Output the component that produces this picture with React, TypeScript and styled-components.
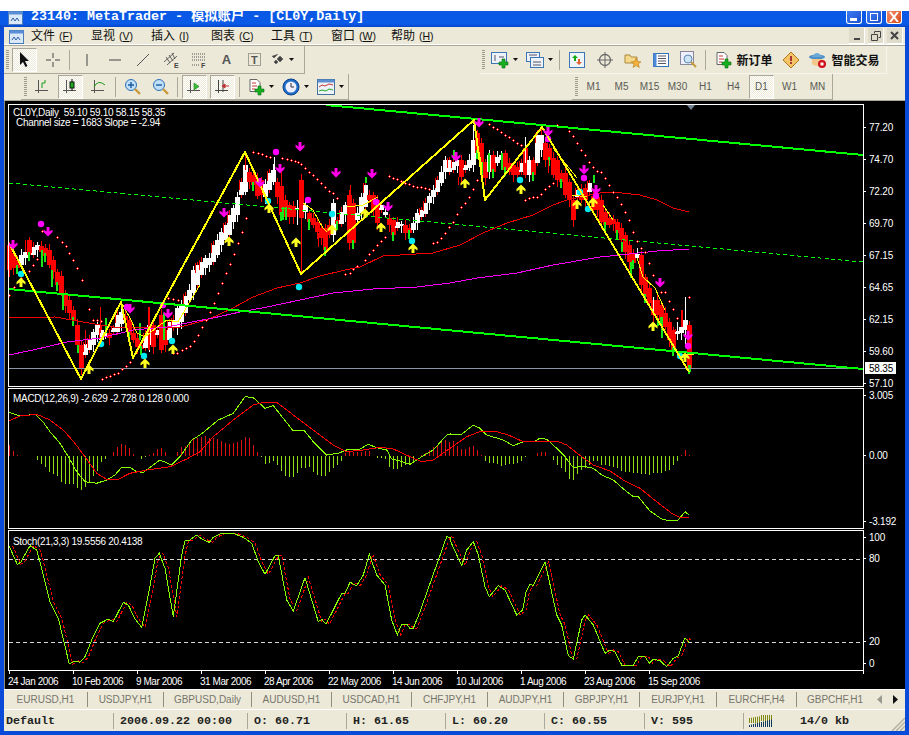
import React from "react";
import styled, { createGlobalStyle } from "styled-components";

const UI = '"Liberation Sans", "Noto Sans CJK SC", sans-serif';
const MONO = '"Liberation Mono", "Noto Sans CJK SC", monospace';

const Global = createGlobalStyle`
  html, body { margin: 0; padding: 0; background: #fff; }
  #root { width: 909px; height: 735px; overflow: hidden; }
`;

const Page = styled.div`
  width: 909px; height: 735px; padding-top: 11px; box-sizing: border-box;
  display: flex; flex-direction: column; background: #fff;
`;
const TitleBar = styled.div`
  height: 16px; flex: none; display: flex; align-items: flex-start; padding: 0 7px 0 8px;
  background: linear-gradient(#0a58e4, #0a5ae8 80%, #0646c8); color: #fff;
`;
const TitleIcon = styled.div`width: 15px; height: 13px; margin-right: 8px; margin-top: -1px;`;
const TitleText = styled.div`
  font: bold 13.33px/11px ${MONO}; white-space: pre; flex: 1; letter-spacing: 0; padding-top: 0;
`;
const CaptionBtn = styled.div<{ $c?: string }>`
  width: 16px; height: 13px; margin-left: 4px; box-sizing: border-box; border: 1px solid #fff; border-top: 0;
  border-radius: 0 0 3px 3px; background: ${(p) => p.$c || "linear-gradient(135deg,#3c7cf0,#1c50d0)"};
  position: relative; display: flex; align-items: center; justify-content: center;
`;
const Frame = styled.div`
  flex: 1; min-height: 0; display: flex; flex-direction: column; background: #ece9d8;
  border-left: 4px solid #0a4ad8; border-right: 4px solid #0a4ad8; border-bottom: 4px solid #0a4ad8;
`;
const MenuBar = styled.div`
  height: 18px; flex: none; display: flex; align-items: center; padding-left: 5px; background: #ece9d8;
  border-bottom: 1px solid #aca899; box-shadow: inset 0 -1px 0 #fff;
`;
const MenuIcon = styled.div`width: 22px; height: 16px; display: flex; align-items: center;`;
const MenuItem = styled.div`
  width: 60px; flex: none; font: 12px/16px ${UI}; color: #111; white-space: nowrap;
  & span { font-size: 10.5px; margin-left: 4px; }
  & u { text-decoration: underline; }
`;
const MdiGroup = styled.div`margin-left: auto; display: flex; gap: 3px; padding-right: 2px;`;
const MdiBtn = styled.div`
  width: 15px; height: 15px; display: flex; align-items: center; justify-content: center; background: #dedbcb;
  border-right: 1px solid #fff; border-bottom: 1px solid #fff;
`;
const ToolRow = styled.div<{ $pl?: number; $pr?: number; $line?: boolean }>`
  flex: none; display: flex; justify-content: space-between;
  padding: 0 ${(p) => p.$pr || 0}px 0 ${(p) => p.$pl || 0}px;
  border-bottom: ${(p) => (p.$line ? "1px solid #aca899" : "0")};
`;
const Toolbar = styled.div<{ $pl?: number; $w: number; $h: number; $edge?: string }>`
  width: ${(p) => p.$w}px; height: ${(p) => p.$h}px; box-sizing: border-box; display: flex; align-items: center; gap: 3px;
  padding-left: ${(p) => p.$pl ?? 2}px; border-right: 1px solid ${(p) => p.$edge || "#aca899"};
  border-bottom: 1px solid ${(p) => p.$edge || "#aca899"};
`;
const Grip = styled.div`
  width: 3px; height: 20px; flex: none;
  background: repeating-linear-gradient(#9c9a8a 0 1px, #ece9d8 1px 2px);
`;
const Sep = styled.div`width: 3px; height: 20px; flex: none; display: flex; justify-content: center;
  &::before { content: ""; width: 1px; background: #aca899; }`;
const ToolBtn = styled.div<{ $w?: number; $pressed?: boolean }>`
  width: ${(p) => p.$w || 25}px; height: 24px; flex: none; box-sizing: border-box; display: flex; align-items: center;
  justify-content: center; gap: 4px;
  font: 10px ${UI}; color: #5b5b55;
  ${(p) => p.$pressed ? "background: repeating-conic-gradient(#fff 0 25%, #ece9d8 0 50%) 0 0/2px 2px; border: 1px solid; border-color: #aca899 #fff #fff #aca899;" : ""}
`;
const LabelText = styled.span`font: bold 12px ${UI}; color: #111; letter-spacing: 0; white-space: nowrap;`;
const ChartWin = styled.div`
  height: 588px; flex: none; background: #000; border-left: 1px solid #8d8b80; display: flex; flex-direction: column;
  padding-top: 2px; box-sizing: border-box;
`;
const Pane = styled.div<{ $h: number }>`
  height: ${(p) => p.$h}px; flex: none; position: relative; width: 900px;
  & > svg { display: block; overflow: visible; }
`;
const Legend = styled.div<{ $t: number; $l: number }>`
  position: absolute; top: ${(p) => p.$t}px; left: ${(p) => p.$l}px; color: #fff; white-space: pre;
  font: 10px/10px ${UI}; letter-spacing: -0.3px;
`;
const DateRow = styled.div`
  height: 18px; flex: none; display: flex; padding-left: 3px; 
`;
const DateCell = styled.div`
  width: 64px; flex: none; color: #fff; font: 10px/15px ${UI}; white-space: nowrap; letter-spacing: -0.45px; 
`;
const Tabs = styled.div`
  height: 21px; flex: none; display: flex; align-items: center; border-top: 1px solid #fff; border-bottom: 1px solid #fff; 
  box-sizing: border-box;
`;
const Tab = styled.div<{ $w: number; $last?: boolean }>`
  width: ${(p) => p.$w}px; flex: none; height: 15px; text-align: center; color: #76756c; font: 10px/15px ${UI};
  border-right: ${(p) => (p.$last ? 0 : "1px solid #8e8c7e")}; box-sizing: border-box; white-space: nowrap;
`;
const Arrows = styled.div`margin-left: auto; display: flex; gap: 11px; padding-right: 7px; align-items: center;`;
const Status = styled.div`
  flex: 1; display: flex; align-items: center; position: relative; padding-top: 1px;
`;
const Cell = styled.div<{ $w: number; $pl?: number; $last?: boolean }>`
  width: ${(p) => p.$w}px; flex: none; height: 16px; box-sizing: border-box; padding-left: ${(p) => p.$pl ?? 6}px;
  border-right: ${(p) => (p.$last ? 0 : "1px solid #aca899")}; display: flex; align-items: center; gap: 27px;
  font: bold 11.67px/16px ${MONO}; color: #222; white-space: pre;
`;
const GripCorner = styled.div`position: absolute; right: 0; bottom: 0; width: 14px; height: 14px; line-height: 0;`;

/* ---------- chart data ---------- */
const C = `245 270 R|253 268 R|260 268 R|255 265 W|252 258 W|240 255 R|247 255 W|245 250 W|246 252 R|248 256 R|250 265 R|260 272 R|272 285 R|276 293 R|293 306 R|300 313 R|310 320 R|325 345 R|345 368 R|344 355 W|340 350 W|332 345 W|325 335 W|330 340 W|333 336 W|333 338 R|328 332 W|315 332 W|312 324 W|316 320 R|320 335 R|333 340 R|338 347 R|345 349 R|335 348 W|325 345 W|325 347 R|330 335 W|315 350 R|330 345 R|322 340 W|320 328 W|308 328 W|305 322 W|296 313 W|290 300 W|270 293 W|265 285 W|262 275 W|258 268 W|258 265 W|245 262 W|240 255 W|232 245 W|225 240 W|215 235 W|208 222 W|197 215 W|182 195 W|165 192 W|172 182 R|175 185 R|178 196 R|180 195 R|184 197 W|173 190 W|170 182 W|182 197 R|186 215 R|200 217 R|205 217 R|206 217 R|208 210 W|180 218 R|205 212 W|213 222 R|218 225 R|222 232 R|228 238 R|228 250 R|225 235 R|203 235 W|220 224 R|212 224 W|205 215 W|195 243 R|203 243 R|213 220 W|197 213 W|185 207 W|195 200 R|195 210 R|200 223 R|205 210 W|212 215 W|218 225 R|220 235 R|222 228 W|224 226 W|225 233 R|228 233 R|223 230 W|213 223 W|210 217 W|203 214 W|196 203 W|190 197 W|180 192 W|172 183 W|160 172 W|160 172 W|162 170 W|160 166 W|160 177 R|165 170 W|160 168 W|140 165 W|133 153 R|143 162 R|162 178 R|155 172 W|155 172 R|157 163 W|155 160 W|153 170 R|163 172 R|165 175 R|167 175 R|163 172 W|148 175 R|160 175 W|160 175 R|135 163 W|135 150 W|143 160 R|148 160 R|158 175 R|160 180 R|173 182 R|173 195 R|182 200 R|200 220 R|190 197 W|190 200 R|188 200 R|183 192 W|196 210 R|197 210 R|200 222 R|212 225 R|218 225 R|219 224 R|222 233 R|228 240 R|235 252 R|245 262 R|253 263 R|254 258 W|255 285 R|277 297 R|288 303 R|300 315 R|300 315 R|305 320 R|313 327 R|322 340 R|330 350 R|331 334 W|327 333 W|320 330 W|325 368 R`
  .split("|").map((s) => { const a = s.split(" "); return { t: +a[0], b: +a[1], w: a[2] === "W" }; });

const GRN = "#18e818", RED = "#ff0000";
const EXTRA: [number, number, number, string, number][] = [
  [41, 250, 267, GRN, 2], [51, 270, 287, GRN, 2], [62, 295, 310, GRN, 2], [77, 345, 353, GRN, 2], [100, 307, 333, RED, 1],
  [105, 318, 333, GRN, 2], [139, 323, 340, GRN, 2], [148, 307, 350, RED, 2], [163, 313, 340, GRN, 2], [282, 207, 220, GRN, 2],
  [285, 207, 220, GRN, 2], [297, 200, 225, "#fff", 1], [308, 224, 230, GRN, 2], [318, 233, 247, RED, 1], [323, 233, 247, RED, 1],
  [365, 177, 183, GRN, 2], [350, 185, 197, RED, 1], [453, 150, 160, GRN, 2], [458, 177, 185, RED, 1], [481, 162, 177, GRN, 2],
  [488, 153, 172, GRN, 2], [501, 153, 170, GRN, 2], [525, 137, 163, "#fff", 1], [548, 160, 173, RED, 1], [593, 175, 183, GRN, 2],
  [573, 220, 226, RED, 1], [621, 242, 252, GRN, 2], [630, 262, 278, GRN, 2], [661, 317, 338, GRN, 2], [657, 318, 326, GRN, 2],
  [653, 297, 313, "#fff", 1], [681, 310, 327, RED, 2], [685, 297, 347, "#fff", 1], [677, 322, 340, "#fff", 1], [689, 365, 372, GRN, 2],
  [301, 179, 273, RED, 1], [245, 155, 170, RED, 1], [274, 157, 170, "#fff", 1], [281, 170, 186, RED, 1], [473, 125, 140, "#fff", 1],
  [541, 125, 135, RED, 1], [85, 330, 345, RED, 1], [25, 240, 252, RED, 1], [29, 240, 250, RED, 1],
];

const z = (a: number[], ox: number, oy: number) => {
  const o: string[] = [];
  for (let i = 0; i < a.length; i += 2) o.push(`${(ox + a[i] / 3).toFixed(1)},${(oy + a[i + 1] / 3).toFixed(1)}`);
  return o.join(" ");
};
const shift = (s: string, dx: number) =>
  s.split(" ").map((p) => { const [x, y] = p.split(","); return `${+x + dx},${y}`; }).join(" ");

const RED_MA = "9,318 55,317 83,322 113,327 180,327 207,320 233,308 253,297 277,288 300,283 320,276 345,270 360,267 383,256 433,253 460,245 483,233 507,223 533,215 553,205 567,200 585,196 600,193 613,192 640,195 657,200 673,208 689,212";
const MAG_MA = "9,355 33,350 67,342 100,338 133,330 167,327 187,323 213,318 240,312 267,307 300,300 333,293 373,289 417,287 450,283 477,278 517,273 553,265 600,257 620,255 657,251 689,249";
const ZIG = "9,243 81,379 121,302 133,358 245,152 301,274 474,120 485,200 542,127 689,372";
const THIN_Y = [
  "121,302 130,318 137,333 145,337 157,327 167,320 178,322 185,310 200,285",
  "303,203 313,210 323,228 327,232",
  "347,207 363,205 378,197",
  "476,137 482,167",
  "553,148 577,178",
  "572,195 587,197",
  "603,205 613,220",
  "637,258 643,277 655,288 665,310",
  "678,354 694,354",
];
const DOTS: [number, number][] = ([
  [9,295],[14,287],[21,278],[29,271],[33,265],[37,259],[42,231],[50,232],[57,237],[62,242],[66,246],[69,253],[73,260],[77,268],[82,280],[89,309],[93,320],[97,320],[101,321],
  [102,379],[106,377],[110,376],[114,374],[118,373],[122,369],[126,366],[130,362],
  [168,298],[173,299],[178,300],[173,353],[177,353],[182,350],[186,348],[190,346],[194,341],[198,335],[202,327],[206,320],[210,312],[214,303],[218,293],[222,283],[226,273],[230,264],[234,254],[238,243],[242,232],[246,218],
  [253,152],[258,153],[262,154],[266,156],[270,157],[282,158],[287,159],[291,160],[295,161],[298,162],[301,164],[305,168],[309,172],[313,175],[317,179],[321,183],[325,187],[329,191],[333,193],[337,198],
  [345,274],[350,273],[353,269],[357,266],[365,260],[369,254],[373,250],[377,245],[381,241],[385,237],
  [389,176],[393,178],[397,179],[401,181],[405,183],[409,184],[413,186],[417,187],[421,187],[425,188],[429,189],
  [433,243],[437,242],[441,238],[445,233],[449,227],[453,222],[457,214],[461,207],[465,203],[469,197],[473,189],[477,180],
  [489,124],[493,127],[497,129],[501,132],[505,135],[509,137],[513,140],[517,143],[521,145],
  [525,200],[529,198],[533,197],[537,197],[541,194],[545,189],[549,186],[553,183],
  [557,125],[569,131],[573,136],[577,143],[581,150],[585,155],[589,162],[593,167],[597,171],[601,172],[605,178],[609,185],[613,192],[617,197],[621,204],[625,212],[629,220],[633,232],[637,241],[641,248],[645,252],[649,263],[653,275],[661,292],[665,292],[669,301],[673,309],[677,318],[689,297],
] as [number, number][]);
const DOWN: [number, number][] = [[13,245],[48,232],[130,309],[168,314],[224,213],[260,183],[280,169],[300,147],[336,173],[372,174],[388,207],[456,157],[479,123],[548,132],[584,170],[596,190],[660,283],[688,336]];
const UP: [number, number][] = [[21,282],[89,369],[145,363],[173,349],[229,241],[269,208],[296,242],[332,229],[365,213],[381,227],[413,248],[465,183],[521,189],[577,204],[593,202],[653,326],[685,357]];
const CYAN: [number, number][] = [[21,274],[101,344],[144,356],[172,341],[268,201],[299,287],[332,214],[412,241],[520,180],[588,209],[580,192],[680,356]];
const MAGD: [number, number][] = [[41,224],[127,307],[163,305],[276,152],[308,200],[376,202],[548,139],[584,178],[596,196],[688,346]];

const MACD_G1 = [27,82,60,93,105,88,130,112,150,140,180,175,205,215,230,260,255,290,290,295,320,285,345,270,365,247,390,247,410,260,430,262,460,240,480,225,515,240,540,215,575,165,600,150,625,130,655,105,700,85,735,35,760,38,795,70,820,62,850,100,880,138,912,136,940,170,980,210,1015,205,1045,193,1075,195,1105,178,1130,188,1160,195,1175,222,1200,228,1230,238,1265,215,1300,195,1340,150,1350,147];
const MACD_G2 = [0,148,35,148,70,120,90,130,110,150,160,165,190,182,220,170,250,170,270,160,290,163,320,190,345,215,370,248,395,243,430,250,455,270,490,285,530,320,550,335,565,335,600,378,635,402,660,408,685,405,705,380,717,390];
const MACD_R1 = [27,108,60,93,110,88,150,105,190,135,225,175,255,215,290,265,320,283,350,285,390,265,440,255,510,245,560,222,600,200,640,155,700,105,760,60,790,52,830,52,880,90,940,135,1000,180,1040,200,1090,195,1140,187,1180,192,1230,215,1265,230,1300,225,1350,190];
const MACD_R2 = [0,190,50,155,95,138,140,140,175,150,215,168,325,170,350,180,395,215,430,240,480,258,520,285,570,310,620,350,665,385,690,397,717,397];
const HIST = [180,198,210,212,212,213,213,225,237,245,260,268,272,290,297,297,297,310,314,305,290,272,258,232,222,213,200,185,177,180,188,207,213,222,215,210,205,192,188,200,212,212,200,185,183,172,160,158,155,153,158,160,162,168,175,178,175,172,165,155,160,180,200,215,236,233,228,240,258,272,276,275,265,250,250,245,262,270,272,272,262,250,240,228,205,202,202,200,200,198,198,213,218,218,222,245,252,252,245,240,240,232,213,210,205,195,185,180,170,165,170,
  168,183,193,192,185,183,195,210,228,235,235,237,243,240,237,238,233,228,215,213,213,203,202,200,213,225,240,248,262,282,285,267,255,250,240,228,228,240,240,242,245,250,257,260,262,263,265,268,268,270,265,265,265,258,255,240,228,210,195,210];
const ST1 = [27,62,52,118,62,112,90,62,110,75,125,130,150,230,175,280,208,417,225,408,240,412,255,395,275,345,300,295,325,282,340,290,370,232,385,240,405,282,425,307,445,210,465,100,478,85,495,130,520,275,545,90,555,48,570,45,590,30,605,42,628,52,640,37,665,25,700,25,730,37,755,55,775,110,795,148,825,92,835,92,860,225,880,258,915,158,955,290,965,283,978,298,1025,205,1035,205,1050,172,1070,182,1090,150,1108,88,1130,150,1155,180,1175,285,1192,330,1205,298,1220,298,1230,310,1240,310,1260,260,1340,35,1350,37];
const ST2 = [0,45,35,122,50,75,70,50,85,90,105,185,118,215,145,182,165,195,200,270,218,255,228,200,240,178,250,182,285,110,320,270,335,300,355,392,370,402,395,285,405,270,430,300,465,385,480,375,495,380,515,420,550,420,565,395,585,395,598,415,610,402,630,407,650,425,670,400,685,392,705,338,717,352];

/* ---------- chart drawing ---------- */
const AxisText: React.FC<{ y: number; x?: number; children: React.ReactNode }> = ({ y, x = 869, children }) => (
  <text x={x} y={y + 4} fontFamily='"Liberation Sans", sans-serif' fontSize={10} letterSpacing={-0.2} fill="#fff">{children}</text>
);
const Tick: React.FC<{ y: number }> = ({ y }) => <rect x={864} y={y} width={2} height={1} fill="#fff" />;
const Border: React.FC<{ t: number; b: number }> = ({ t, b }) => (
  <rect x={8.5} y={t + 0.5} width={855} height={b - t} fill="none" stroke="#fff" strokeWidth={1} shapeRendering="crispEdges" />
);

const MainPane = () => (
  <svg width={900} height={284} viewBox="5 103 900 284">
    {C.map((c, i) => {
      const x = 9 + 4 * i;
      const h = (i * 37 + 11) % 7;
      return (
        <g key={i} shapeRendering="crispEdges">
          <rect x={x} y={c.t - 3 - (h % 4)} width={1} height={c.b - c.t + 6 + h} fill={c.w ? (h < 3 ? RED : "#fff") : RED} />
          <rect x={x - 2} y={c.t} width={5} height={c.b - c.t} fill={c.w ? "#fff" : RED} />
          {c.w && h < 3 ? <rect x={x - 2} y={c.t - 2} width={1} height={Math.min(c.b - c.t, 10)} fill={RED} /> : null}
          {!c.w && h < 2 ? <rect x={x - 1} y={c.b - 3} width={2} height={9} fill={GRN} /> : null}
        </g>
      );
    })}
    {EXTRA.map((e, i) => (
      <rect key={i} x={e[0]} y={e[1]} width={e[4]} height={e[2] - e[1]} fill={e[3]} shapeRendering="crispEdges" />
    ))}
    <g fill="none" shapeRendering="crispEdges">
      <line x1={9} y1={183} x2={863} y2={262} stroke="#00ff00" strokeWidth={1} strokeDasharray="4 3" />
      <line x1={9} y1={368.5} x2={863} y2={368.5} stroke="#8a96a8" strokeWidth={1} />
      <polyline points={RED_MA} stroke="#f00000" strokeWidth={1} />
      <polyline points={MAG_MA} stroke="#ff00ff" strokeWidth={1} />
      {THIN_Y.map((p) => <polyline key={p} points={p} stroke="#ffff00" strokeWidth={1} />)}
    </g>
    {DOTS.map(([x, y], i) => (
      <g key={i} shapeRendering="crispEdges">
        <rect x={x - 1} y={y} width={3} height={1} fill="#f00" />
        <rect x={x} y={y - 1} width={1} height={3} fill="#f00" />
        <rect x={x} y={y} width={1} height={1} fill="#fff" />
      </g>
    ))}
    {CYAN.map(([x, y], i) => <circle key={i} cx={x} cy={y} r={3.2} fill="#00e8f0" />)}
    {MAGD.map(([x, y], i) => <circle key={i} cx={x} cy={y} r={3.2} fill="#ff00ff" />)}
    <g fill="none" shapeRendering="crispEdges">
      <line x1={326} y1={105} x2={863} y2={155} stroke="#00ff00" strokeWidth={2} />
      <line x1={9} y1={289} x2={863} y2={369} stroke="#00ff00" strokeWidth={2} />
      <polyline points={ZIG} stroke="#ffff00" strokeWidth={2} strokeLinejoin="round" />
    </g>
    {DOWN.map(([x, y], i) => (
      <path key={i} fill="#ff00e8" d={`M${x - 1.5} ${y - 5}h3v4.500l3-2v2.500l-4.500 4.500l-4.500-4.500v-2.500l3 2z`} />
    ))}
    {UP.map(([x, y], i) => (
      <path key={i} fill="#ffff20" d={`M${x - 1.5} ${y + 5}h3v-4.500l3 2v-2.500l-4.500-4.500l-4.500 4.500v2.500l3-2z`} />
    ))}
    <path d="M686 104h10l-5 6z" fill="#708090" />
    <Border t={104} b={386} />
    {[[127,"77.20"],[159,"74.70"],[191,"72.20"],[223,"69.70"],[255,"67.15"],[287,"64.65"],[319,"62.15"],[351,"59.60"],[383,"57.10"]].map(([y, t]) => (
      <g key={t}><Tick y={y as number} /><AxisText y={y as number}>{t}</AxisText></g>
    ))}
    <rect x={865} y={362} width={31} height={12} fill="#fff" />
    <text x={869} y={372} fontFamily='"Liberation Sans", sans-serif' fontSize={10} letterSpacing={-0.2} fill="#000">58.35</text>
  </svg>
);

const MacdPane = () => (
  <svg width={900} height={142} viewBox="5 387 900 142">
    {HIST.map((t, i) => {
      const x = 9 + 4 * i; const y = 385 + t / 3;
      if (Math.abs(t - 213) < 1) return null;
      return t < 213
        ? <rect key={i} x={x} y={y} width={1} height={456 - y} fill="#e01010" shapeRendering="crispEdges" />
        : <rect key={i} x={x} y={456} width={1} height={y - 456} fill="#8fe010" shapeRendering="crispEdges" />;
    })}
    <g fill="none" strokeWidth={1} shapeRendering="crispEdges">
      <polyline points={z(MACD_G1, 0, 385) + " " + z(MACD_G2, 450, 385)} stroke="#88ff00" />
      <polyline points={z(MACD_R1, 0, 385) + " " + z(MACD_R2, 450, 385)} stroke="#ff0000" />
    </g>
    <Border t={388} b={528} />
    {[[395,"3.005"],[455,"0.00"],[521,"-3.192"]].map(([y, t]) => (
      <g key={t}><Tick y={y as number} /><AxisText y={y as number}>{t}</AxisText></g>
    ))}
  </svg>
);

const stoch = z(ST1, 0, 525) + " " + z(ST2, 450, 525);
const StochPane = () => (
  <svg width={900} height={142} viewBox="5 529 900 142">
    <g fill="none" strokeWidth={1} shapeRendering="crispEdges">
      <line x1={9} y1={559.5} x2={863} y2={559.5} stroke="#d8d8d8" strokeDasharray="4 3" />
      <line x1={9} y1={642.5} x2={863} y2={642.5} stroke="#d8d8d8" strokeDasharray="4 3" />
      <polyline points={shift(stoch, 3.5)} stroke="#ff0000" strokeDasharray="3 2" />
      <polyline points={stoch} stroke="#88ff00" />
    </g>
    <Border t={530} b={670} />
    {[[537,"100"],[558,"80"],[641,"20"],[663,"0"]].map(([y, t]) => (
      <g key={t}><Tick y={y as number} /><AxisText y={y as number}>{t}</AxisText></g>
    ))}
  </svg>
);

const DATES = ["24 Jan 2006","10 Feb 2006","9 Mar 2006","31 Mar 2006","28 Apr 2006","22 May 2006","14 Jun 2006","10 Jul 2006","1 Aug 2006","23 Aug 2006","15 Sep 2006"];
const TickRow = styled.svg`display: block; flex: none;`;

/* ---------- icons ---------- */
const I: React.FC<{ w?: number; h?: number; children: React.ReactNode }> = ({ w = 18, h = 18, children }) => (
  <svg width={w} height={h} viewBox={`0 0 ${w} ${h}`} style={{ flex: "none" }}>{children}</svg>
);
const Caret = () => <I w={5} h={3}><path d="M0 0h5l-2.5 3z" fill="#111" /></I>;
const Axes = ({ c = "#555" }: { c?: string }) => (
  <g stroke={c} fill="none" strokeWidth="1"><path d="M4.5 2v13M1 12.5h13" /></g>
);
const AppIcon = () => (
  <I w={15} h={15}>
    <rect x=".5" y="1.5" width="14" height="13" fill="#dbe8f8" stroke="#4a7cb8" />
    <rect x=".5" y="1.5" width="14" height="3" fill="#5a8fd8" />
    <path d="M3 11l2-3 2 3 2-3 2 3" stroke="#2a5fa8" fill="none" />
  </I>
);
const PlusBadge = () => <path d="M8 8h3V5h3v3h3v3h-3v3h-3v-3H8z" fill="#14b01e" stroke="#0a6b10" strokeWidth=".6" transform="translate(0 3)" />;
const PaperPlus = () => (
  <I><path d="M3 1.5h7l3 3v9H3z" fill="#fff" stroke="#666" /><path d="M5 5h4M5 8h5M5 11h3" stroke="#c33" /><PlusBadge /></I>
);
const Clock = () => (
  <I><circle cx="9" cy="9" r="8" fill="#1e6ec8" stroke="#0a3f88" /><circle cx="9" cy="9" r="5.5" fill="#eef" /><path d="M9 5v4h3" stroke="#333" fill="none" /></I>
);
const TemplateIcon = () => (
  <I w={18} h={16}><rect x=".5" y=".5" width="17" height="15" fill="#eef3fa" stroke="#41719c" /><rect x=".5" y=".5" width="17" height="3" fill="#5b8ed0" /><path d="M2 8l3-2 3 1 4-2 4 1" stroke="#c33" fill="none" /><path d="M2 12l3-1 4 1 3-2 4 1" stroke="#2a2" fill="none" /></I>
);
const ChartBox = () => (
  <I><rect x=".5" y="1.5" width="15" height="11" fill="#eef3fa" stroke="#3d76b4" /><path d="M4 4v6M8 6h5" stroke="#556" /><PlusBadge /></I>
);
const ChartBox2 = () => (
  <I><rect x=".5" y="1.5" width="13" height="9" fill="#eef3fa" stroke="#3d76b4" /><rect x="4.5" y="6.5" width="13" height="10" fill="#eef3fa" stroke="#3d76b4" /><path d="M3 4h8M7 11h8M7 14h8" stroke="#556" /></I>
);

const MENU: [string, string][] = [["文件", "F"], ["显视", "V"], ["插入", "I"], ["图表", "C"], ["工具", "T"], ["窗口", "W"], ["帮助", "H"]];
const PERIODS = ["M1", "M5", "M15", "M30", "H1", "H4", "D1", "W1", "MN"];
const TABS: [string, number][] = [["EURUSD,H1", 84], ["USDJPY,H1", 76], ["GBPUSD,Daily", 88], ["AUDUSD,H1", 80], ["USDCAD,H1", 80], ["CHFJPY,H1", 76], ["AUDJPY,H1", 76], ["GBPJPY,H1", 76], ["EURJPY,H1", 77], ["EURCHF,H4", 80], ["GBPCHF,H1", 76]];

export default function App() {
  return (
    <>
      <Global />
      <Page>
        <TitleBar>
          <TitleIcon><AppIcon /></TitleIcon>
          <TitleText>23140: MetaTrader - 模拟账户 - [CL0Y,Daily]</TitleText>
          <CaptionBtn><I w={8} h={8}><rect x="0" y="5" width="7" height="3" fill="#fff" /></I></CaptionBtn>
          <CaptionBtn><I w={10} h={8}><rect x="1.5" y=".5" width="7" height="7" fill="none" stroke="#fff" /></I></CaptionBtn>
          <CaptionBtn $c="linear-gradient(135deg,#f09070,#d84818)"><I w={10} h={10}><path d="M1 0l8 10M9 0l-8 10" stroke="#fff" strokeWidth="2" /></I></CaptionBtn>
        </TitleBar>
        <Frame>
          <MenuBar>
            <MenuIcon><AppIcon /></MenuIcon>
            {MENU.map(([t, k]) => (
              <MenuItem key={k}>{t}<span>(<u>{k}</u>)</span></MenuItem>
            ))}
            <MdiGroup>
              <MdiBtn><I w={8} h={8}><rect x="1" y="6" width="6" height="2" fill="#444" /></I></MdiBtn>
              <MdiBtn><I w={10} h={10}><path d="M3.5 2.5V.5h6v6h-2M.5 3.5h6v6h-6z" fill="none" stroke="#444" /></I></MdiBtn>
              <MdiBtn><I w={9} h={9}><path d="M1 1l7 7M8 1l-7 7" stroke="#444" strokeWidth="2" /></I></MdiBtn>
            </MdiGroup>
          </MenuBar>
          <ToolRow $pr={18}>
            <Toolbar $w={301} $h={28}>
              <Grip />
              <ToolBtn $pressed><I w={12} h={15}><path d="M1 0v13l3-3 2.500 5 2-1-2.500-5h4z" fill="#111" /></I></ToolBtn>
              <ToolBtn><I w={16} h={16}><path d="M8 1v5M8 10v5M1 8h5M10 8h5" stroke="#444" /></I></ToolBtn>
              <Sep />
              <ToolBtn><I w={4} h={14}><path d="M2 1v12" stroke="#444" /></I></ToolBtn>
              <ToolBtn><I w={14} h={4}><path d="M1 2h12" stroke="#444" /></I></ToolBtn>
              <ToolBtn><I w={14} h={14}><path d="M1 13L13 1" stroke="#555" /></I></ToolBtn>
              <ToolBtn><I w={16} h={16}><path d="M1 10l10-9M4 13l10-9M3 5l4 6M6 3l4 6M9 1l3 6" stroke="#555" strokeWidth=".9" fill="none" /><text x="11" y="16" fontSize="7" fontFamily="Liberation Sans" fontWeight="bold" fill="#444">E</text></I></ToolBtn>
              <ToolBtn><I w={16} h={16}><path d="M1 2h13M1 5h13M1 8h13M1 13h7" stroke="#555" strokeDasharray="1 1" /><text x="10" y="16" fontSize="7" fontFamily="Liberation Sans" fontWeight="bold" fill="#444">F</text></I></ToolBtn>
              <ToolBtn><LabelText style={{ fontSize: 13, color: "#555" }}>A</LabelText></ToolBtn>
              <ToolBtn><I w={13} h={13}><rect x=".5" y=".5" width="12" height="12" fill="none" stroke="#555" strokeDasharray="1 1" /><text x="3" y="11" fontSize="11" fontFamily="Liberation Sans" fontWeight="bold" fill="#555">T</text></I></ToolBtn>
              <ToolBtn><I w={13} h={12}><path d="M0 2l2 2 4-4M5 5l3 3 3-3-3-3zM2 8l2 2 2-2-2-2z" fill="#444" stroke="#444" strokeWidth=".5" /></I><Caret /></ToolBtn>
            </Toolbar>
            <Toolbar $w={407} $h={28} $pl={2} $edge="#f6f5ee">
              <Grip />
              <ToolBtn $w={32}><ChartBox /><Caret /></ToolBtn>
              <ToolBtn $w={32}><ChartBox2 /><Caret /></ToolBtn>
              <Sep />
              <ToolBtn><I w={16} h={16}><rect x=".5" y=".5" width="15" height="15" fill="#eef5fb" stroke="#3d76b4" /><path d="M5 9V6H3l3-3 3 3H7v3z" fill="#1a1" /><path d="M9 7v3H7l3 3 3-3h-2V7z" fill="#d63" /></I></ToolBtn>
              <ToolBtn><I w={16} h={16}><circle cx="8" cy="8" r="5.500" fill="none" stroke="#666" strokeWidth="1.300" /><path d="M8 0v16M0 8h16" stroke="#666" /></I></ToolBtn>
              <ToolBtn><I w={18} h={16}><path d="M1 3h5l1 2h6v6H1z" fill="#f5d88a" stroke="#a98a3c" /><path d="M12 6l1.500 3.500 3.500.3-2.700 2.200 1 3.500-3.300-2-3 2 1-3.500L7.200 9.800l3.500-.3z" fill="#f3b13c" stroke="#b77d1c" strokeWidth=".6" /></I></ToolBtn>
              <ToolBtn><I w={16} h={14}><rect x=".5" y=".5" width="15" height="13" fill="#fff" stroke="#2f72b8" /><rect x=".5" y=".5" width="3" height="13" fill="#4a8ad8" /><path d="M5 3h8M5 5.500h8M5 8h8M5 10.500h8" stroke="#556" /></I></ToolBtn>
              <ToolBtn><I w={18} h={17}><rect x=".5" y=".5" width="13" height="13" fill="#eef" stroke="#889" /><circle cx="8" cy="8" r="4" fill="#cde4f6" stroke="#5c8ab0" /><path d="M11 11l5 5" stroke="#c89a3c" strokeWidth="2" /></I></ToolBtn>
              <Sep />
              <ToolBtn $w={67}><PaperPlus /><LabelText>新订单</LabelText></ToolBtn>
              <ToolBtn $w={22}><I w={16} h={16}><path d="M8 0l8 8-8 8-8-8z" fill="#f3c468" stroke="#b07a1c" /><rect x="7" y="4" width="2" height="5" fill="#a33" /><rect x="7" y="10" width="2" height="2" fill="#a33" /></I></ToolBtn>
              <ToolBtn $w={79}><I w={18} h={16}><ellipse cx="8" cy="5" rx="8" ry="2.500" fill="#4e90c8" /><path d="M3 5q5-8 10 0z" fill="#6aa8d8" /><path d="M3 7h10v5q-5 4-10 0z" fill="#f3c888" /><circle cx="13" cy="12" r="4" fill="#d0101a" /><rect x="11.500" y="10.500" width="3" height="3" fill="#fff" /></I><LabelText>智能交易</LabelText></ToolBtn>
            </Toolbar>
          </ToolRow>
          <ToolRow $pl={17} $pr={72} $line>
            <Toolbar $w={328} $h={26} $pl={3}>
              <Grip />
              <ToolBtn><I><Axes /><path d="M8 10V5h3V2" stroke="#1a9a1a" fill="none" /></I></ToolBtn>
              <ToolBtn $pressed><I><Axes /><rect x="8" y="4" width="4" height="6" fill="#1aaa1a" stroke="#111" /><path d="M10 1v3M10 10v3" stroke="#111" /></I></ToolBtn>
              <ToolBtn><I><Axes /><path d="M4 9q4-8 11-2" stroke="#1a9a1a" fill="none" /></I></ToolBtn>
              <Sep />
              <ToolBtn><I w={17} h={17}><circle cx="7" cy="7" r="5.500" fill="#bfe0f8" stroke="#2f6fb4" /><path d="M4 7h6M7 4v6" stroke="#1a5aa0" strokeWidth="1.400" /><path d="M11 11l5 5" stroke="#c89a3c" strokeWidth="2.400" /></I></ToolBtn>
              <ToolBtn><I w={17} h={17}><circle cx="7" cy="7" r="5.500" fill="#bfe0f8" stroke="#2f6fb4" /><path d="M4 7h6" stroke="#1a5aa0" strokeWidth="1.400" /><path d="M11 11l5 5" stroke="#c89a3c" strokeWidth="2.400" /></I></ToolBtn>
              <Sep />
              <ToolBtn $pressed><I><Axes /><path d="M8 5l5 3.500-5 3.500z" fill="#35c035" stroke="#1a7a1a" strokeWidth=".6" /></I></ToolBtn>
              <ToolBtn $pressed><I><Axes c="#444" /><path d="M9 2v12" stroke="#444" /><path d="M15 8l-4 0M11 6l-3 2 3 2z" fill="#c03030" stroke="#c03030" /></I></ToolBtn>
              <Sep />
              <ToolBtn $w={32}><PaperPlus /><Caret /></ToolBtn>
              <ToolBtn $w={32}><Clock /><Caret /></ToolBtn>
              <ToolBtn $w={32}><TemplateIcon /><Caret /></ToolBtn>
            </Toolbar>
            <Toolbar $w={261} $h={26} $pl={3}>
              <Grip />
              {PERIODS.map((p) => <ToolBtn key={p} $pressed={p === "D1"}>{p}</ToolBtn>)}
            </Toolbar>
          </ToolRow>
          <ChartWin>
            <Pane $h={284}>
              <MainPane />
              <Legend $t={5} $l={8}>{"CL0Y,Daily  59.10 59.10 58.15 58.35"}</Legend>
              <Legend $t={15} $l={11}>{"Channel size = 1683 Slope = -2.94"}</Legend>
            </Pane>
            <Pane $h={142}>
              <MacdPane />
              <Legend $t={7} $l={8}>{"MACD(12,26,9) -2.629 -2.728 0.128 0.000"}</Legend>
            </Pane>
            <Pane $h={142}>
              <StochPane />
              <Legend $t={8} $l={8}>{"Stoch(21,3,3) 19.5556 20.4138"}</Legend>
            </Pane>
            <TickRow width={900} height={3} viewBox="5 671 900 3">
              {DATES.map((_, i) => <rect key={i} x={9 + 64 * i} y={671} width={1} height={3} fill="#fff" />)}
              <rect x={863} y={671} width={1} height={3} fill="#fff" />
            </TickRow>
            <DateRow>
              {DATES.map((d) => <DateCell key={d}>{d}</DateCell>)}
            </DateRow>
          </ChartWin>
          <Tabs>
            {TABS.map(([t, w], i) => <Tab key={t} $w={w} $last={i === TABS.length - 1}>{t}</Tab>)}
            <Arrows>
              <I w={5} h={9}><path d="M5 0v9L0 4.500z" fill="#9a9a90" /></I>
              <I w={5} h={9}><path d="M0 0v9l5-4.500z" fill="#111" /></I>
            </Arrows>
          </Tabs>
          <Status>
            <Cell $w={110} $pl={2}>Default</Cell>
            <Cell $w={134}>2006.09.22 00:00</Cell>
            <Cell $w={99}>O: 60.71</Cell>
            <Cell $w={99}>H: 61.65</Cell>
            <Cell $w={99}>L: 60.20</Cell>
            <Cell $w={100}>C: 60.55</Cell>
            <Cell $w={99}>V: 595</Cell>
            <Cell $w={140} $pl={5} $last>
              <I w={24} h={12}>
                {Array.from({ length: 12 }, (_, i) => (
                  <g key={i}>
                    <rect x={i * 2} y={i < 6 ? 3 - i / 3 : 0} width={1} height={i < 6 ? 5 + i / 3 : 6} fill="#7f8a10" />
                    <rect x={i * 2} y={12 - (i / 2 + 2)} width={1} height={i / 2 + 2} fill="#0e3a60" />
                  </g>
                ))}
              </I>
              14/0 kb
            </Cell>
            <GripCorner>
              <I w={14} h={14}><path d="M14 1L1 14M14 5L5 14M14 9L9 14M14 13L13 14" stroke="#b5b2a2" strokeWidth="1.500" /></I>
            </GripCorner>
          </Status>
        </Frame>
      </Page>
    </>
  );
}
